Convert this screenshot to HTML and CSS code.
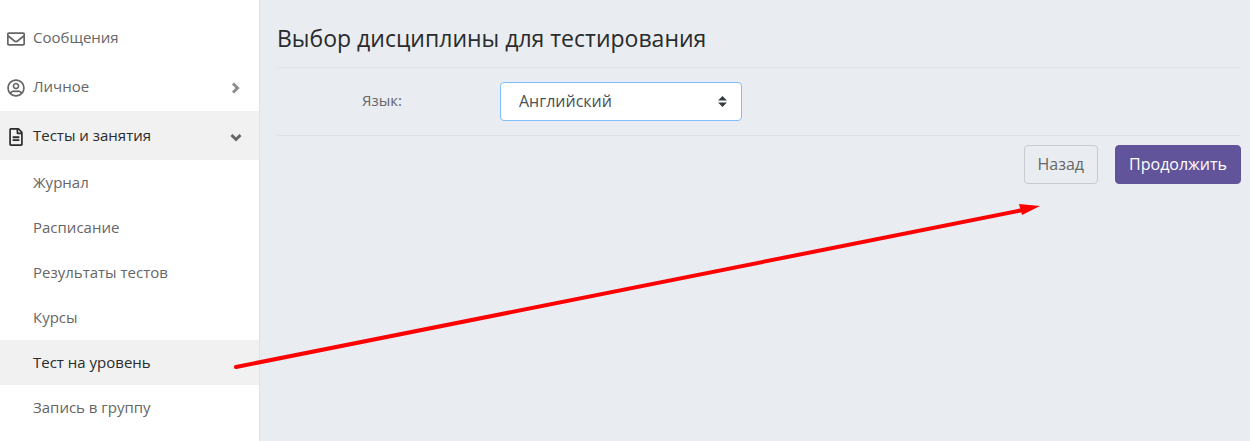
FILE: index.html
```html
<!DOCTYPE html>
<html lang="ru">
<head>
  <meta charset="UTF-8">
  <meta name="viewport" content="width=device-width, initial-scale=1.0">
  <title>Выбор дисциплины для тестирования</title>
  <link rel="stylesheet" href="styles.css">
</head>
<body>

<!-- Боковое меню -->
<nav class="sidebar">
  <a class="menu-item" href="#">
    <svg class="menu-icon" viewBox="0 0 512 512"><path d="M464 64H48C21.490 64 0 85.490 0 112v288c0 26.510 21.490 48 48 48h416c26.510 0 48-21.490 48-48V112c0-26.510-21.490-48-48-48zm0 48v40.805c-22.422 18.259-58.168 46.651-134.587 106.490-16.841 13.247-50.201 45.072-73.413 44.701-23.208.375-56.579-31.459-73.413-44.701C106.180 199.465 70.425 171.067 48 152.805V112h416zM48 400V214.398c22.914 18.251 55.409 43.862 104.938 82.646 21.857 17.205 60.134 55.186 103.062 54.955 42.717.231 80.509-37.199 103.053-54.947 49.528-38.783 82.032-64.401 104.947-82.653V400H48z"/></svg>
    <span>Сообщения</span>
  </a>
  <a class="menu-item" href="#">
    <svg class="menu-icon" viewBox="0 0 496 512"><path d="M248 104c-53 0-96 43-96 96s43 96 96 96 96-43 96-96-43-96-96-96zm0 144c-26.500 0-48-21.500-48-48s21.500-48 48-48 48 21.500 48 48-21.500 48-48 48zm0-240C111 8 0 119 0 256s111 248 248 248 248-111 248-248S385 8 248 8zm0 448c-49.700 0-95.100-18.300-130.100-48.400 14.900-23 40.400-38.600 69.600-39.500 20.800 6.400 40.600 9.600 60.500 9.600s39.700-3.100 60.500-9.600c29.200 1 54.700 16.500 69.600 39.500-35 30.100-80.400 48.400-130.100 48.400zm162.700-84.100c-24.400-31.400-62.100-51.900-105.100-51.900-10.200 0-26 9.600-57.600 9.600-31.500 0-47.400-9.600-57.600-9.600-42.900 0-80.600 20.500-105.100 51.900C61.900 339.200 48 299.200 48 256c0-110.300 89.700-200 200-200s200 89.700 200 200c0 43.200-13.900 83.200-37.300 115.900z"/></svg>
    <span>Личное</span>
    <svg class="chevron" viewBox="0 0 10 12"><path d="M2 1.500L6.500 6L2 10.500"/></svg>
  </a>
  <a class="menu-item active" href="#">
    <svg class="menu-icon" viewBox="0 0 384 512"><path d="M288 248v28c0 6.600-5.400 12-12 12H108c-6.600 0-12-5.400-12-12v-28c0-6.600 5.400-12 12-12h168c6.600 0 12 5.400 12 12zm-12 72H108c-6.600 0-12 5.400-12 12v28c0 6.600 5.400 12 12 12h168c6.600 0 12-5.400 12-12v-28c0-6.600-5.400-12-12-12zm108-188.100V464c0 26.500-21.500 48-48 48H48c-26.500 0-48-21.500-48-48V48C0 21.500 21.500 0 48 0h204.100C264.800 0 277 5.100 286 14.100L369.900 98c9 8.900 14.100 21.200 14.100 33.900zm-128-80V128h76.100L256 51.900zM336 464V176H232c-13.300 0-24-10.700-24-24V48H48v416h288z"/></svg>
    <span>Тесты и занятия</span>
    <svg class="chevron" viewBox="0 0 12 10"><path d="M1.500 3L6 7.500L10.500 3"/></svg>
  </a>
  <div class="submenu">
    <a class="submenu-item" href="#">Журнал</a>
    <a class="submenu-item" href="#">Расписание</a>
    <a class="submenu-item" href="#">Результаты тестов</a>
    <a class="submenu-item" href="#">Курсы</a>
    <a class="submenu-item active" href="#">Тест на уровень</a>
    <a class="submenu-item" href="#">Запись в группу</a>
  </div>
</nav>

<!-- Форма выбора дисциплины -->
<main class="content">
  <h1 class="title">Выбор дисциплины для тестирования</h1>
  <form>
    <div class="form-row">
      <label class="form-label" for="language">Язык:</label>
      <div class="select-wrap">
        <select class="select" id="language">
          <option>Английский</option>
        </select>
        <svg class="select-arrows" viewBox="0 0 8 10"><path d="M4 0L8 4H0zM0 6H8L4 10z"/></svg>
      </div>
    </div>
    <div class="buttons">
      <button class="button" type="button">Назад</button>
      <button class="button primary" type="submit">Продолжить</button>
    </div>
  </form>
</main>

<!-- Стрелка-указатель поверх страницы -->
<svg class="pointer" viewBox="0 0 810 170">
  <path class="pointer-line" d="M6 167L793 10"/>
  <path class="pointer-head" d="M810 6L789 4L792 15z"/>
</svg>

</body>
</html>
```

FILE: styles.css
```css
* {
  box-sizing: border-box;
}

body {
  display: flex;
  min-height: 100vh;
  margin: 0;
  font-family: 'Open Sans', 'Noto Sans', sans-serif;
  font-size: 15px;
  color: #666;
  background-color: #e9edf2;
  position: relative;
  overflow-x: hidden;
}

/* Боковое меню */
.sidebar {
  flex: 0 0 260px;
  padding-top: 13px;
  background-color: #fff;
  border-right: 1px solid #dee2e6;
}

.menu-item {
  display: flex;
  align-items: center;
  gap: 8px;
  height: 49px;
  padding: 0 17px 2px 7px;
  color: #666;
  text-decoration: none;
}

.menu-icon {
  width: 18px;
  height: 18px;
  margin-top: 4px;
  fill: currentColor;
}

.menu-item.active,
.submenu-item.active {
  color: #292b2c;
  background-color: #f1f1f1;
}

.chevron {
  width: 12px;
  height: 12px;
  margin-top: 4px;
  margin-left: auto;
  fill: none;
  stroke: #8c8c8c;
  stroke-width: 3;
}

.menu-item.active .chevron {
  stroke: #666;
}

.submenu-item {
  display: flex;
  align-items: center;
  height: 45px;
  padding: 0 0 2px 33px;
  color: #666;
  text-decoration: none;
}

/* Основная часть */
.content {
  flex: 1;
  padding: 23px 9px 24px 17px;
}

.title {
  margin: 0;
  padding-bottom: 14px;
  font-size: 23px;
  font-weight: 400;
  line-height: 30px;
  color: #292b2c;
  border-bottom: 1px solid #dee2e6;
}

.form-row {
  display: flex;
  align-items: center;
  padding: 14px 0;
  border-bottom: 1px solid #dee2e6;
}

.form-label {
  flex: 0 0 223px;
  padding: 0 98px 4px 0;
  text-align: right;
}

.select-wrap {
  display: grid;
  flex: 0 1 242px;
  align-items: center;
}

.select {
  grid-area: 1 / 1;
  width: 100%;
  height: 39px;
  padding: 0 32px 2px 18px;
  font: inherit;
  font-size: 16px;
  color: #495057;
  background-color: #fff;
  border: 1px solid #80bdff;
  border-radius: 4px;
  appearance: none;
}

.select-arrows {
  grid-area: 1 / 1;
  justify-self: end;
  width: 9px;
  height: 11px;
  margin-right: 15px;
  fill: #343a40;
  pointer-events: none;
}

.buttons {
  display: flex;
  justify-content: flex-end;
  gap: 17px;
  padding-top: 9px;
}

.button {
  height: 39px;
  padding: 0 13px 2px;
  font: inherit;
  font-size: 16px;
  color: #666;
  background-color: transparent;
  border: 1px solid #c8cccf;
  border-radius: 4px;
  cursor: pointer;
}

.button.primary {
  color: #fff;
  background-color: #62549a;
  border-color: #62549a;
}

/* Стрелка */
.pointer {
  position: absolute;
  top: 200px;
  left: 230px;
  width: 810px;
  height: 170px;
  pointer-events: none;
}

.pointer-line {
  fill: none;
  stroke: #f00;
  stroke-width: 4;
  stroke-linecap: round;
}

.pointer-head {
  fill: #f00;
}
```
